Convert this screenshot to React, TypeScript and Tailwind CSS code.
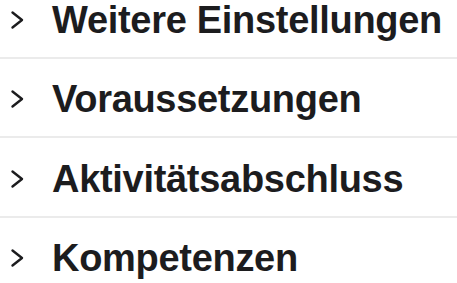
const items = ["Weitere Einstellungen", "Voraussetzungen", "Aktivitätsabschluss", "Kompetenzen"];

function Chevron() {
  return (
    <svg width="15" height="20" viewBox="0 0 15 20" fill="none" className="text-[#1c1c1e]">
      <path d="M2.5 2.5 L12 10 L2.5 17.5" stroke="currentColor" strokeWidth="2.4" strokeLinecap="round" strokeLinejoin="round" />
    </svg>
  );
}

export default function App() {
  return (
    <div className="w-[457px] h-[283px] overflow-hidden bg-white" style={{ fontFamily: '"Liberation Sans", Arial, sans-serif' }}>
      <div className="-mt-[21px]">
        {items.map((label) => (
          <div key={label} className="h-[79.5px] flex items-center border-b-2 border-[#ebebeb]">
            <div className="w-[52px] flex items-center pl-[10px] pt-[4px]">
              <Chevron />
            </div>
            <span className="text-[38px] font-bold text-[#1c1c1e] tracking-[-0.3px] pt-[5px]">{label}</span>
          </div>
        ))}
      </div>
    </div>
  );
}
